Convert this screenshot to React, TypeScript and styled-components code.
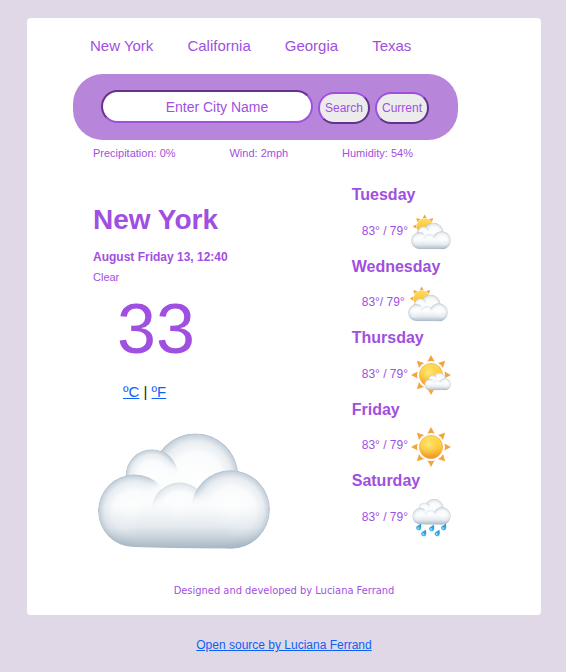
import React from "react";
import styled, { createGlobalStyle } from "styled-components";

const purple = "#9f50e0";
const blue = "#0d62f5";

const GlobalStyle = createGlobalStyle`
  *, *::before, *::after { box-sizing: border-box; }
  body {
    margin: 0;
    background: #e0d8e6;
    color: #212529;
    font-family: "Liberation Sans", Arial, sans-serif;
  }
  h1, h2, p, ul { margin: 0; padding: 0; }
  ul { list-style: none; }
`;

const Page = styled.div`
  padding: 18px 25px 16px 27px;
`;

const Card = styled.main`
  background: #fff;
  border-radius: 4px;
  padding: 18px 83px 15px 46px;
`;

const CityNav = styled.nav`
  display: flex;
  gap: 34px;
  padding-left: 17px;
`;

const CityLink = styled.a`
  color: ${purple};
  font-size: 15px;
  line-height: 20px;
  text-decoration: none;
  white-space: nowrap;
`;

const SearchBar = styled.form`
  display: flex;
  align-items: flex-start;
  gap: 5px;
  margin-top: 18px;
  padding: 16px 29px 16px 28px;
  border-radius: 30px;
  background: #b786db;
`;

const CityInput = styled.input`
  flex: 1;
  min-width: 0;
  height: 33px;
  padding: 0 0 0 20px;
  border: 2px inset ${purple};
  border-radius: 20px;
  background: #fff;
  color: ${purple};
  font: 14px "Liberation Sans", Arial, sans-serif;
  text-align: center;

  &::placeholder {
    color: ${purple};
    opacity: 1;
  }
`;

const BarButton = styled.button`
  height: 32px;
  margin-top: 2px;
  padding: 0 5px;
  border: 2px outset ${purple};
  border-radius: 20px;
  background: #ececec;
  color: ${purple};
  font: 12px "Liberation Sans", Arial, sans-serif;
`;

const Conditions = styled.ul`
  display: flex;
  justify-content: space-between;
  margin-top: 5px;
  padding: 0 45px 0 20px;
`;

const Condition = styled.li`
  color: ${purple};
  font-size: 11px;
  line-height: 16px;
`;

const Forecast = styled.div`
  display: flex;
  justify-content: space-between;
  margin-top: 21px;
  padding: 0 7px 0 20px;
`;

const Current = styled.section`
  padding-top: 20px;
  color: ${purple};
`;

const CityName = styled.h1`
  font-size: 28px;
  line-height: 36px;
`;

const DateLine = styled.p`
  margin-top: 9px;
  font-size: 12px;
  font-weight: 700;
  line-height: 20px;
`;

const Description = styled.p`
  font-size: 11px;
  line-height: 20px;
`;

const Temperature = styled.p`
  padding-left: 24px;
  font-size: 70px;
  line-height: 84px;
`;

const Units = styled.p`
  margin-top: 11px;
  padding-left: 30px;
  color: #212529;
  font-size: 15px;
  line-height: 20px;
`;

const BlueLink = styled.a`
  color: ${blue};
  text-decoration: underline;
`;

const BigCloud = styled.svg`
  display: block;
  width: 172px;
  height: 116px;
  margin: 31px 0 0 5px;
`;

const Days = styled.ul`
  display: flex;
  flex-direction: column;
  justify-content: space-between;
  margin-bottom: 11px;
  color: ${purple};
`;

const DayName = styled.h2`
  padding-top: 1px;
  font-size: 16px;
  line-height: 24px;
`;

const DayRow = styled.div`
  display: flex;
  align-items: center;
  gap: 3px;
  margin-top: 5px;
  padding-left: 10px;
  font-size: 12px;
  line-height: 18px;
`;

const DayTemps = styled.span`
  padding-bottom: 3px;
  white-space: nowrap;
`;

const DayIcon = styled.svg`
  display: block;
  width: 40px;
  height: 40px;
`;

const Credit = styled.p`
  margin: 33px -37px 0 0;
  color: ${purple};
  font-family: "DejaVu Sans Condensed", "Noto Sans", sans-serif;
  font-size: 11px;
  line-height: 18px;
  text-align: center;
`;

const Footer = styled.footer`
  padding-top: 20px;
  font-size: 12px;
  line-height: 20px;
  text-align: center;
`;

const Definitions = styled.svg`
  display: block;
  width: 0;
  height: 0;
`;

function SharedDefs() {
  return (
    <Definitions aria-hidden="true">
      <defs>
        <radialGradient id="puff" cx="0.5" cy="0.5" r="0.5" fx="0.53" fy="0.57">
          <stop offset="0" stopColor="#ffffff" />
          <stop offset="0.6" stopColor="#fafbfc" />
          <stop offset="0.83" stopColor="#e8edf1" />
          <stop offset="0.95" stopColor="#cbd5de" />
          <stop offset="1" stopColor="#b1bfcc" />
        </radialGradient>
        <radialGradient id="innerPuff" cx="0.5" cy="0.5" r="0.5" fx="0.53" fy="0.57">
          <stop offset="0" stopColor="#ffffff" />
          <stop offset="0.7" stopColor="#fbfcfd" />
          <stop offset="0.92" stopColor="#e6ebef" />
          <stop offset="1" stopColor="#d5dde4" />
        </radialGradient>
        <linearGradient id="underside" x1="0" y1="0" x2="0" y2="1">
          <stop offset="0" stopColor="#b9c7d2" stopOpacity="0" />
          <stop offset="0.5" stopColor="#b4c2ce" stopOpacity="0.3" />
          <stop offset="1" stopColor="#9fb1c0" stopOpacity="0.95" />
        </linearGradient>
        <filter id="soften" x="-100%" y="-100%" width="300%" height="300%">
          <feGaussianBlur stdDeviation="14" />
        </filter>
        <clipPath id="cloudShape">
          <circle cx="290" cy="128" r="128" />
          <circle cx="160" cy="126" r="78" />
          <circle cx="108" cy="231" r="108" />
          <circle cx="395" cy="227" r="117" />
          <path d="M108 130H395V343Q240 344 108 339Z" />
        </clipPath>
        <linearGradient id="sunDisc" x1="0" y1="0" x2="0" y2="1">
          <stop offset="0" stopColor="#ffdc58" />
          <stop offset="0.55" stopColor="#fdc63b" />
          <stop offset="1" stopColor="#f0922a" />
        </linearGradient>
        <radialGradient id="sunGlow" cx="0.4" cy="0.4" r="0.5">
          <stop offset="0" stopColor="#fff08a" stopOpacity="0.8" />
          <stop offset="1" stopColor="#ffd84b" stopOpacity="0" />
        </radialGradient>
        <linearGradient id="drop" x1="0" y1="0" x2="0" y2="1">
          <stop offset="0" stopColor="#2c86c0" />
          <stop offset="1" stopColor="#3cc3f4" />
        </linearGradient>
      </defs>
    </Definitions>
  );
}

function CloudShape() {
  return (
    <g clipPath="url(#cloudShape)">
      <circle cx="290" cy="128" r="128" fill="url(#puff)" />
      <circle cx="160" cy="126" r="78" fill="url(#puff)" />
      <ellipse cx="240" cy="170" rx="54" ry="80" fill="#fcfdfd" filter="url(#soften)" />
      <circle cx="108" cy="231" r="108" fill="url(#puff)" />
      <ellipse cx="205" cy="205" rx="54" ry="84" fill="#fcfdfd" filter="url(#soften)" />
      <circle cx="243" cy="231" r="84" fill="url(#innerPuff)" />
      <circle cx="395" cy="227" r="117" fill="url(#puff)" />
      <ellipse cx="175" cy="270" rx="62" ry="72" fill="#fafbfc" filter="url(#soften)" />
      <ellipse cx="290" cy="268" rx="60" ry="84" fill="#fbfcfd" filter="url(#soften)" />
      <rect x="105" y="285" width="290" height="65" fill="#f2f5f7" filter="url(#soften)" />
      <rect x="0" y="215" width="512" height="130" fill="url(#underside)" />
    </g>
  );
}

type PlacedProps = { x: number; y: number; scale: number };

function Cloud({ x, y, scale }: PlacedProps) {
  return (
    <g transform={`translate(${x} ${y}) scale(${scale})`}>
      <CloudShape />
    </g>
  );
}

function Sun({ x, y, scale }: PlacedProps) {
  return (
    <g transform={`translate(${x} ${y}) scale(${scale})`}>
      {[0, 45, 90, 135, 180, 225, 270, 315].map((angle) => (
        <path key={angle} d="M0-20L3.6-13.4Q0-14.8-3.6-13.4Z" fill="#f0a63e" transform={`rotate(${angle})`} />
      ))}
      <circle r="11.6" fill="url(#sunDisc)" stroke="#eda132" strokeWidth="0.6" />
      <circle r="11" fill="url(#sunGlow)" />
    </g>
  );
}

const drops = [
  [7.5, 29.5],
  [20.5, 30.5],
  [32.5, 29.5],
  [12.5, 35.5],
  [26, 35.5],
];

type Weather = "partly" | "mostlySunny" | "sunny" | "rain";

function WeatherIcon({ kind }: { kind: Weather }) {
  return (
    <DayIcon viewBox="0 0 40 40" role="img" aria-label={kind}>
      {kind === "partly" && (
        <>
          <Sun x={13.7} y={14.5} scale={0.6} />
          <circle cx="13.7" cy="14.5" r="8" fill="url(#sunDisc)" />
          <Cloud x={0} y={10.6} scale={0.078} />
        </>
      )}
      {kind === "mostlySunny" && (
        <>
          <Sun x={20} y={20} scale={1} />
          <Cloud x={13.3} y={17.5} scale={0.052} />
        </>
      )}
      {kind === "sunny" && <Sun x={20} y={20} scale={1} />}
      {kind === "rain" && (
        <>
          <Cloud x={1.2} y={0.8} scale={0.0755} />
          {drops.map(([x, y]) => (
            <g key={`${x}-${y}`} transform={`translate(${x} ${y})`}>
              <path d="M2.4-3.8C2.9-1 3 .5 2.2 2A2.7 2.7 0 0 1-2.4-.3C-1.4-1.8.4-2.5 2.4-3.8Z" fill="url(#drop)" />
              <circle cx="-0.4" cy="0.6" r="0.8" fill="#c9f1ff" />
            </g>
          ))}
        </>
      )}
    </DayIcon>
  );
}

const cities = ["New York", "California", "Georgia", "Texas"];

const days: { name: string; temps: string; kind: Weather }[] = [
  { name: "Tuesday", temps: "83° / 79°", kind: "partly" },
  { name: "Wednesday", temps: "83°/ 79°", kind: "partly" },
  { name: "Thursday", temps: "83° / 79°", kind: "mostlySunny" },
  { name: "Friday", temps: "83° / 79°", kind: "sunny" },
  { name: "Saturday", temps: "83° / 79°", kind: "rain" },
];

export default function App() {
  return (
    <Page>
      <GlobalStyle />
      <Card>
        <CityNav>
          {cities.map((city) => (
            <CityLink key={city} href="#">{city}</CityLink>
          ))}
        </CityNav>
        <SearchBar onSubmit={(event) => event.preventDefault()}>
          <CityInput type="text" placeholder="Enter City Name" aria-label="City name" />
          <BarButton type="submit">Search</BarButton>
          <BarButton type="button">Current</BarButton>
        </SearchBar>
        <Conditions>
          <Condition>Precipitation: 0%</Condition>
          <Condition>Wind: 2mph</Condition>
          <Condition>Humidity: 54%</Condition>
        </Conditions>
        <Forecast>
          <Current>
            <CityName>New York</CityName>
            <DateLine>August Friday 13, 12:40</DateLine>
            <Description>Clear</Description>
            <Temperature>33</Temperature>
            <Units>
              <BlueLink href="#">ºC</BlueLink> | <BlueLink href="#">ºF</BlueLink>
            </Units>
            <BigCloud viewBox="0 0 512 344" role="img" aria-label="Cloud">
              <CloudShape />
            </BigCloud>
          </Current>
          <Days>
            {days.map((day) => (
              <li key={day.name}>
                <DayName>{day.name}</DayName>
                <DayRow>
                  <DayTemps>{day.temps}</DayTemps>
                  <WeatherIcon kind={day.kind} />
                </DayRow>
              </li>
            ))}
          </Days>
        </Forecast>
        <Credit>Designed and developed by Luciana Ferrand</Credit>
      </Card>
      <Footer>
        <BlueLink href="#">Open source by Luciana Ferrand</BlueLink>
      </Footer>
      <SharedDefs />
    </Page>
  );
}
